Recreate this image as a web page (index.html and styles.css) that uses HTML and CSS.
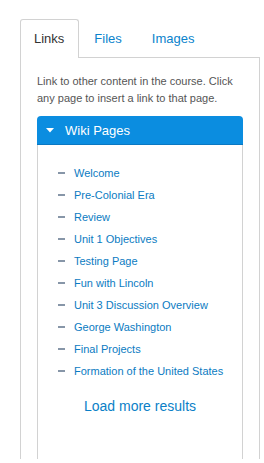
FILE: index.html
```html
<!DOCTYPE html>
<html>
<head>
<meta charset="utf-8">
<link rel="stylesheet" href="styles.css">
</head>
<body>
<div class="sidebar">
  <div class="tabs">
    <div class="tab active">Links</div>
    <div class="tab">Files</div>
    <div class="tab">Images</div>
  </div>
  <div class="panel">
    <p class="desc">Link to other content in the course. Click any page to insert a link to that page.</p>
    <div class="acc-head">
      <svg class="caret" width="8" height="5" viewBox="0 0 8 5"><path d="M0 0H8L4 4.5Z" fill="#fff"/></svg>
      <span>Wiki Pages</span>
    </div>
    <div class="acc-body">
      <ul class="pages">
        <li><span class="dash"></span><a>Welcome</a></li>
        <li><span class="dash"></span><a>Pre-Colonial Era</a></li>
        <li><span class="dash"></span><a>Review</a></li>
        <li><span class="dash"></span><a>Unit 1 Objectives</a></li>
        <li><span class="dash"></span><a>Testing Page</a></li>
        <li><span class="dash"></span><a>Fun with Lincoln</a></li>
        <li><span class="dash"></span><a>Unit 3 Discussion Overview</a></li>
        <li><span class="dash"></span><a>George Washington</a></li>
        <li><span class="dash"></span><a>Final Projects</a></li>
        <li><span class="dash"></span><a>Formation of the United States</a></li>
      </ul>
      <div class="more">Load more results</div>
    </div>
  </div>
</div>
</body>
</html>
```
FILE: styles.css
```css
html, body {
  margin: 0;
  padding: 0;
  background: #fff;
}
body {
  font-family: "Liberation Sans", Arial, sans-serif;
}
.sidebar {
  width: 240px;
  height: 440px;
  margin-left: 20px;
  padding-top: 19px;
  display: flex;
  flex-direction: column;
  overflow: hidden;
}
.tabs {
  display: flex;
  height: 38px;
  gap: 1px;
  position: relative;
  z-index: 1;
}
.tab {
  box-sizing: border-box;
  height: 38px;
  padding: 0 14px 0 13px;
  border: 1px solid transparent;
  border-bottom: none;
  border-radius: 3px 3px 0 0;
  font-size: 13px;
  line-height: 37px;
  color: #0a83cc;
}
.tab.active {
  color: #333;
  border-color: #d2d2d2;
  background: #fff;
  height: 39px;
}
.panel {
  flex: 1;
  border: 1px solid #d2d2d2;
  border-bottom: none;
  padding: 15px 16px 0;
  display: flex;
  flex-direction: column;
}
.desc {
  margin: 0 0 9px;
  font-size: 11px;
  line-height: 17px;
  color: #555;
}
.acc-head {
  height: 29px;
  background: #0b8de0;
  border-radius: 4px 4px 0 0;
  border-bottom: 1px solid #0a78c2;
  box-sizing: border-box;
  display: flex;
  align-items: center;
  padding-left: 9px;
  color: #fff;
  font-size: 13px;
}
.caret {
  margin-right: 11px;
  margin-top: 1px;
}
.acc-body {
  flex: 1;
  border-left: 1px solid #d2d2d2;
  border-right: 1px solid #d2d2d2;
  padding-top: 17px;
}
.pages {
  list-style: none;
  margin: 0;
  padding: 0 0 0 20px;
}
.pages li {
  display: flex;
  align-items: center;
  height: 22px;
  font-size: 11px;
}
.dash {
  width: 7px;
  height: 2px;
  background: #8796a8;
  margin-right: 9px;
}
.pages a {
  color: #0b7bc2;
}
.more {
  margin-top: 13px;
  text-align: center;
  font-size: 14px;
  line-height: 22px;
  color: #0b7fc7;
}
```
